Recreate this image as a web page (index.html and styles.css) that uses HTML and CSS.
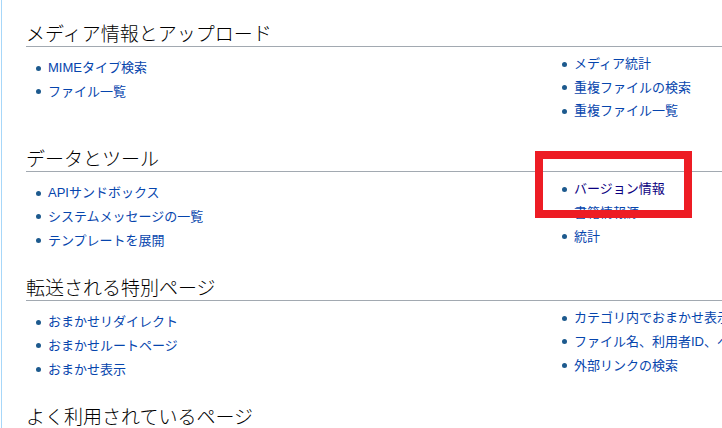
FILE: index.html
```html
<!DOCTYPE html>
<html lang="ja">
<head>
<meta charset="utf-8">
<title>特別ページ</title>
<link rel="stylesheet" href="styles.css">
</head>
<body>
<div class="content">
  <section class="group">
    <h2 class="group-title">メディア情報とアップロード</h2>
    <div class="cols">
      <ul class="list list-left">
        <li><a href="#">MIMEタイプ検索</a></li>
        <li><a href="#">ファイル一覧</a></li>
      </ul>
      <ul class="list list-right">
        <li><a href="#">メディア統計</a></li>
        <li><a href="#">重複ファイルの検索</a></li>
        <li><a href="#">重複ファイル一覧</a></li>
      </ul>
    </div>
  </section>
  <section class="group">
    <h2 class="group-title">データとツール</h2>
    <div class="cols">
      <ul class="list list-left">
        <li><a href="#">APIサンドボックス</a></li>
        <li><a href="#">システムメッセージの一覧</a></li>
        <li><a href="#">テンプレートを展開</a></li>
      </ul>
      <ul class="list list-right">
        <li><a href="#" class="visited">バージョン情報</a></li>
        <li><a href="#">書籍情報源</a></li>
        <li><a href="#">統計</a></li>
      </ul>
    </div>
  </section>
  <section class="group">
    <h2 class="group-title">転送される特別ページ</h2>
    <div class="cols">
      <ul class="list list-left">
        <li><a href="#">おまかせリダイレクト</a></li>
        <li><a href="#">おまかせルートページ</a></li>
        <li><a href="#">おまかせ表示</a></li>
      </ul>
      <ul class="list list-right">
        <li><a href="#">カテゴリ内でおまかせ表示</a></li>
        <li><a href="#">ファイル名、利用者ID、ページ</a></li>
        <li><a href="#">外部リンクの検索</a></li>
      </ul>
    </div>
  </section>
  <section class="group">
    <h2 class="group-title">よく利用されているページ</h2>
  </section>
</div>
<div class="highlight"></div>
</body>
</html>
```

FILE: styles.css
```css
html, body {
  margin: 0;
  padding: 0;
  background: #fff;
  overflow: hidden;
}
body {
  width: 722px;
  height: 428px;
  position: relative;
  padding-left: 1px;
  box-sizing: border-box;
}
.content {
  border-left: 1px solid #a7d7f9;
  padding: 21px 0 0 24px;
  height: 100%;
  box-sizing: border-box;
}
.group-title {
  margin: 23px 0 0 0;
  font-family: "Noto Sans CJK JP", sans-serif;
  font-weight: 300;
  font-size: 19px;
  line-height: 24px;
  padding-bottom: 1px;
  color: #000;
  border-bottom: 1px solid #a2a9b1;
  white-space: nowrap;
}
.group:first-child .group-title {
  margin-top: 0;
}
.cols {
  display: grid;
  grid-template-columns: 526px 526px;
  align-items: start;
}
.list {
  list-style: none;
  margin: 0 0 0 22px;
  padding: 0;
  font-family: "Liberation Sans", "Noto Sans CJK JP", sans-serif;
  font-size: 13px;
  line-height: 23.7px;
  white-space: nowrap;
}
.list-left {
  margin-top: 9px;
}
.list-right {
  margin-top: 5px;
}
.list li {
  position: relative;
}
.list li::before {
  content: "";
  position: absolute;
  left: -12px;
  top: 9.5px;
  width: 5px;
  height: 5px;
  border-radius: 50%;
  background: #1d5a8e;
}
.list a {
  color: #0645ad;
  text-decoration: none;
}
.list a.visited {
  color: #0b0080;
}
.highlight {
  position: absolute;
  left: 535px;
  top: 151px;
  width: 157px;
  height: 67px;
  box-sizing: border-box;
  border: 8px solid #ed1c24;
}
```
